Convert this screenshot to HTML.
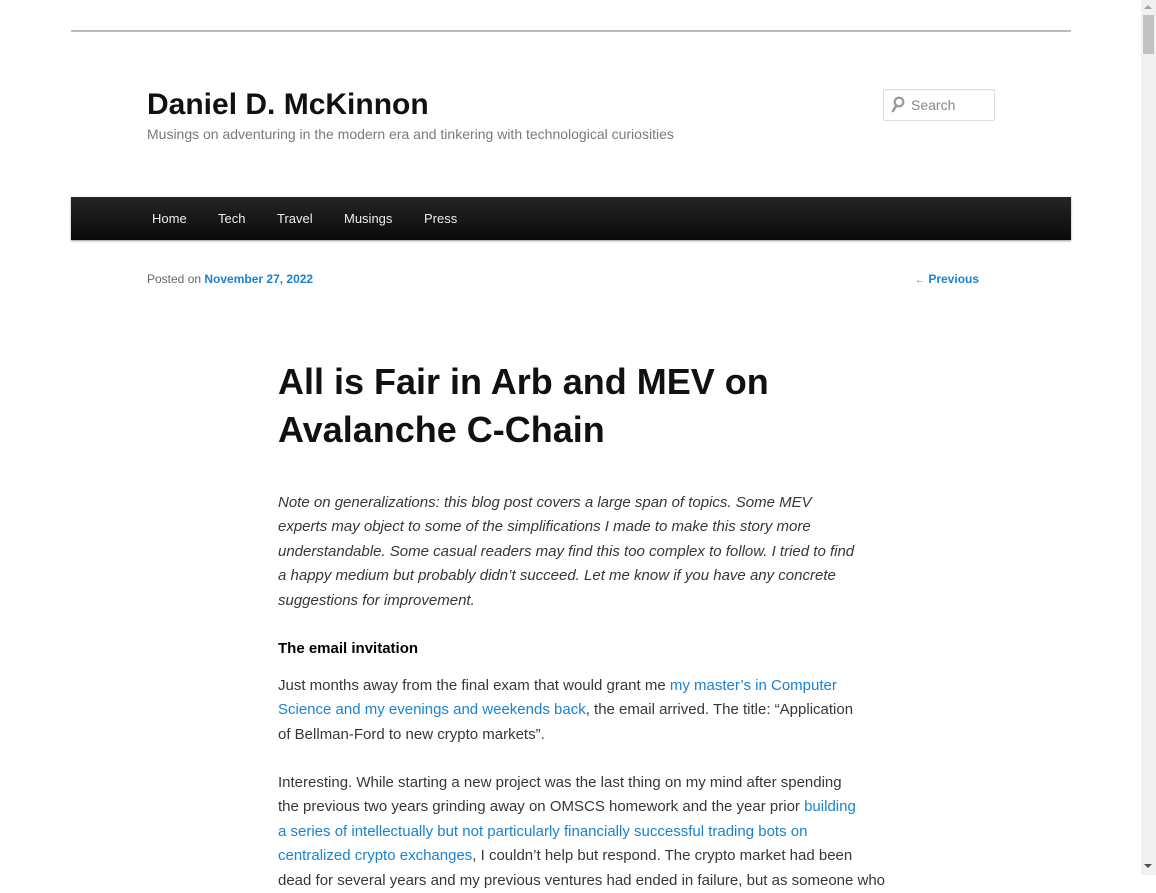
<!DOCTYPE html>
<html><head><meta charset="utf-8"><style>
html,body{margin:0;padding:0;width:1156px;height:875px;overflow:hidden;background:#fff;font-family:"Liberation Sans",Arial,sans-serif;color:#373737}
.a{position:absolute;white-space:nowrap}
a{color:#1982d1;text-decoration:none}
.p{font-size:15px;line-height:24.4px}
</style></head><body>
<div class="a" style="left:71px;top:30px;width:1000px;height:2px;background:#bbb"></div>
<div class="a" style="left:147px;top:86px;font-size:30px;font-weight:bold;color:#111;line-height:38px">Daniel D. McKinnon</div>
<div class="a" style="left:147px;top:125px;font-size:14px;color:#7a7a7a;line-height:18px">Musings on adventuring in the modern era and tinkering with technological curiosities</div>
<div class="a" style="left:883px;top:89px;width:110px;height:30px;border:1px solid #ddd;border-radius:2px;box-shadow:inset 0 1px 1px rgba(0,0,0,.05)"></div>
<svg class="a" style="left:891px;top:96px" width="14" height="17" viewBox="0 0 14 17"><circle cx="8" cy="6" r="4.3" fill="none" stroke="#999" stroke-width="2.2"/><line x1="5.3" y1="9.5" x2="2" y2="15" stroke="#999" stroke-width="2.6" stroke-linecap="round"/></svg>
<div class="a" style="left:911px;top:96px;font-size:14px;color:#888;line-height:18px">Search</div>
<div class="a" style="left:71px;top:197px;width:1000px;height:43px;background:linear-gradient(#252525,#0a0a0a);box-shadow:0 1px 2px rgba(0,0,0,.4)"></div>
<div class="a" style="left:152px;top:210px;font-size:13px;color:#eee;line-height:17px">Home</div>
<div class="a" style="left:218px;top:210px;font-size:13px;color:#eee;line-height:17px">Tech</div>
<div class="a" style="left:277px;top:210px;font-size:13px;color:#eee;line-height:17px">Travel</div>
<div class="a" style="left:344px;top:210px;font-size:13px;color:#eee;line-height:17px">Musings</div>
<div class="a" style="left:424px;top:210px;font-size:13px;color:#eee;line-height:17px">Press</div>
<div class="a" style="left:147px;top:271px;font-size:12px;color:#666;line-height:16px">Posted on <a style="font-weight:bold">November 27, 2022</a></div>
<div class="a" style="left:915px;top:271px;font-size:12px;line-height:16px"><a style="font-weight:bold"><span style="font-weight:normal;font-size:10px">←</span> Previous</a></div>
<div class="a" style="left:278px;top:358px;font-size:36px;font-weight:bold;color:#111;line-height:48px">All is Fair in Arb and MEV on<br>Avalanche C-Chain</div>
<div class="a p" style="left:278px;top:491px;font-style:italic">Note on generalizations: this blog post covers a large span of topics. Some MEV<br>experts may object to some of the simplifications I made to make this story more<br>understandable. Some casual readers may find this too complex to follow. I tried to find<br>a happy medium but probably didn’t succeed. Let me know if you have any concrete<br>suggestions for improvement.</div>
<div class="a p" style="left:278px;top:637px;font-weight:bold;color:#000">The email invitation</div>
<div class="a p" style="left:278px;top:674px">Just months away from the final exam that would grant me <a>my master’s in Computer</a><br><a>Science and my evenings and weekends back</a>, the email arrived. The title: “Application<br>of Bellman-Ford to new crypto markets”.</div>
<div class="a p" style="left:278px;top:771px">Interesting. While starting a new project was the last thing on my mind after spending<br>the previous two years grinding away on OMSCS homework and the year prior <a>building</a><br><a>a series of intellectually but not particularly financially successful trading bots on</a><br><a>centralized crypto exchanges</a>, I couldn’t help but respond. The crypto market had been<br>dead for several years and my previous ventures had ended in failure, but as someone who</div>
<div class="a" style="left:1141px;top:0;width:15px;height:875px;background:#f1f1f1"></div>
<div class="a" style="left:1143px;top:15px;width:11px;height:39px;background:#c1c1c1"></div>
<div class="a" style="left:1144px;top:5px;width:0;height:0;border-left:4px solid transparent;border-right:4px solid transparent;border-bottom:4px solid #a3a3a3"></div>
<div class="a" style="left:1144px;top:864px;width:0;height:0;border-left:4px solid transparent;border-right:4px solid transparent;border-top:4px solid #505050"></div>
</body></html>
